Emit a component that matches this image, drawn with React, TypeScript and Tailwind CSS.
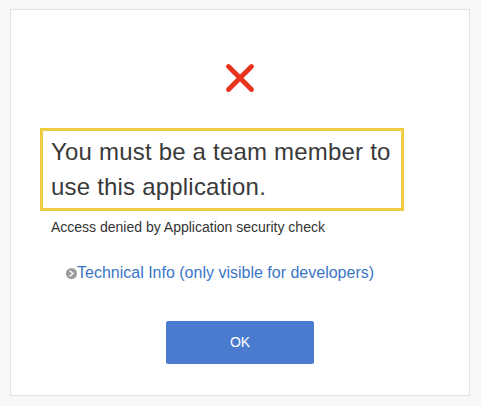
export default function App() {
  return (
    <div className="w-[481px] h-[406px] bg-[#f7f7f7] pt-[9px] pl-[10px] font-['Liberation_Sans',Arial,sans-serif]">
      <div className="w-[460px] h-[387px] bg-white border border-[#e2e2e2] flex flex-col">
        <div className="flex justify-center mt-[53px]">
          <svg width="30" height="30" viewBox="0 0 30 30">
            <path d="M3.5 3.5 L26.5 26.5 M26.5 3.5 L3.5 26.5" stroke="#e8331f" strokeWidth="4.8" strokeLinecap="round" fill="none" />
          </svg>
        </div>
        <div className="ml-[29px] mt-[35px] w-[364px] border-[3px] border-[#efcc41] pl-[8px] pt-[3px] pb-[4px] text-[24px] tracking-[0.2px] leading-[35px] text-[#3a3a3a]">
          You must be a team member to use this application.
        </div>
        <div className="ml-[40px] mt-[7px] text-[14px] leading-[18px] text-[#333]">
          Access denied by Application security check
        </div>
        <div className="ml-[55px] mt-[27px] flex items-center text-[16px] leading-[20px] text-[#3a76c6]">
          <span className="w-[11px] h-[11px] rounded-full bg-[#9b9b9b] flex items-center justify-center">
            <svg width="7" height="7" viewBox="0 0 7 7">
              <path d="M2 1 L5 3.5 L2 6" stroke="white" strokeWidth="1.4" fill="none" strokeLinecap="round" strokeLinejoin="round" />
            </svg>
          </span>
          <span>Technical Info (only visible for developers)</span>
        </div>
        <div className="flex justify-center mt-[38px]">
          <button className="w-[148px] h-[43px] bg-[#4a7bcf] rounded-[2px] text-white text-[14px]">OK</button>
        </div>
      </div>
    </div>
  );
}
